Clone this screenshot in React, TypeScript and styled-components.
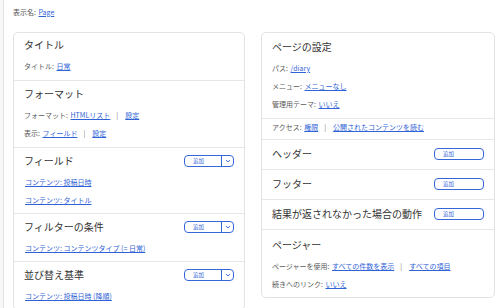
import React from 'react';
import styled, { createGlobalStyle } from 'styled-components';

const GlobalStyle = createGlobalStyle`
  html, body {
    margin: 0;
    padding: 0;
    background: #f7f7f7;
  }
  body {
    font-family: "Noto Sans CJK JP", "Noto Sans", sans-serif;
    color: #333;
  }
`;

const Page = styled.div`
  margin-left: 3px;
  border-left: 1px solid #e2e2e2;
  background: #ffffff;
  min-height: 308px;
  padding: 6px 0 0 9px;
  box-sizing: border-box;
`;

const DisplayName = styled.div`
  font-size: 7px;
  line-height: 12px;
  color: #555;
  margin-bottom: 14px;
`;

const Columns = styled.div`
  display: grid;
  grid-template-columns: 232px 234px;
  gap: 16px;
  align-items: start;
`;

const Card = styled.div`
  border: 1px solid #e3e3e3;
  border-radius: 5px;
  background: #fff;
  overflow: hidden;
`;

const Section = styled.div<{ $top?: number; $bottom?: number }>`
  padding: ${(p) => p.$top ?? 6}px 10px ${(p) => p.$bottom ?? 9}px;
  & + & {
    border-top: 1px solid #e6e6e6;
  }
`;

const HeadRow = styled.div`
  display: flex;
  align-items: center;
  justify-content: space-between;
  height: 14px;
`;

const Heading = styled.div`
  font-size: 10px;
  line-height: 14px;
  font-weight: 400;
  color: #333;
`;

const Line = styled.div<{ $first?: boolean; $flush?: boolean }>`
  font-size: 7px;
  line-height: 10px;
  color: #5a5a5a;
  margin-top: ${(p) => (p.$flush ? 0 : p.$first ? 9 : 8)}px;
  white-space: nowrap;
`;

const A = styled.a`
  color: #2f63d6;
  text-decoration: underline;
  text-underline-offset: 1px;
  margin-left: 1px;
  cursor: pointer;
`;

const Sep = styled.span`
  color: #777;
  margin: 0 6px;
`;

const AddButton = styled.div`
  display: flex;
  align-items: stretch;
  width: 50px;
  height: 12px;
  border: 1.5px solid #3567d9;
  border-radius: 4px;
  box-sizing: border-box;
  font-size: 5.5px;
  color: #3567d9;
  overflow: hidden;
  flex-shrink: 0;
`;

const AddLabel = styled.span`
  flex: 1;
  display: flex;
  align-items: center;
  padding-left: 8px;
`;

const Chevron = styled.span`
  width: 11px;
  border-left: 1px solid #3567d9;
  display: flex;
  align-items: center;
  justify-content: center;
`;

const Add = ({ split }: { split?: boolean }) => (
  <AddButton>
    <AddLabel>追加</AddLabel>
    {split && (
      <Chevron>
        <svg width="6" height="4" viewBox="0 0 6 4">
          <path d="M1 1 L3 3 L5 1" fill="none" stroke="#3567d9" strokeWidth="0.9" />
        </svg>
      </Chevron>
    )}
  </AddButton>
);

export default function App() {
  return (
    <>
      <GlobalStyle />
      <Page>
        <DisplayName>
          表示名: <A>Page</A>
        </DisplayName>
        <Columns>
          <Card>
            <Section $top={5}>
              <HeadRow><Heading>タイトル</Heading></HeadRow>
              <Line $first>タイトル: <A>日常</A></Line>
            </Section>
            <Section>
              <HeadRow><Heading>フォーマット</Heading></HeadRow>
              <Line $first>
                フォーマット: <A>HTMLリスト</A><Sep>|</Sep><A>設定</A>
              </Line>
              <Line>
                表示: <A>フィールド</A><Sep>|</Sep><A>設定</A>
              </Line>
            </Section>
            <Section $bottom={8}>
              <HeadRow><Heading>フィールド</Heading><Add split /></HeadRow>
              <Line $first><A>コンテンツ: 投稿日時</A></Line>
              <Line><A>コンテンツ: タイトル</A></Line>
            </Section>
            <Section $bottom={8}>
              <HeadRow><Heading>フィルターの条件</Heading><Add split /></HeadRow>
              <Line $first><A>コンテンツ: コンテンツタイプ (= 日常)</A></Line>
            </Section>
            <Section $bottom={8}>
              <HeadRow><Heading>並び替え基準</Heading><Add split /></HeadRow>
              <Line $first><A>コンテンツ: 投稿日時 (降順)</A></Line>
            </Section>
          </Card>
          <Card>
            <Section $top={7} $bottom={9}>
              <HeadRow><Heading>ページの設定</Heading></HeadRow>
              <Line $first>パス: <A>/diary</A></Line>
              <Line>メニュー: <A>メニューなし</A></Line>
              <Line>管理用テーマ: <A>いいえ</A></Line>
            </Section>
            <Section $top={3} $bottom={7}>
              <Line $flush>
                アクセス: <A>権限</A><Sep>|</Sep><A>公開されたコンテンツを読む</A>
              </Line>
            </Section>
            <Section $top={7} $bottom={8}>
              <HeadRow><Heading>ヘッダー</Heading><Add /></HeadRow>
            </Section>
            <Section $top={7} $bottom={8}>
              <HeadRow><Heading>フッター</Heading><Add /></HeadRow>
            </Section>
            <Section $top={7} $bottom={8}>
              <HeadRow><Heading>結果が返されなかった場合の動作</Heading><Add /></HeadRow>
            </Section>
            <Section $top={8} $bottom={8}>
              <HeadRow><Heading>ページャー</Heading></HeadRow>
              <Line $first>
                ページャーを使用: <A>すべての件数を表示</A><Sep>|</Sep><A>すべての項目</A>
              </Line>
              <Line>続きへのリンク: <A>いいえ</A></Line>
            </Section>
          </Card>
        </Columns>
      </Page>
    </>
  );
}
